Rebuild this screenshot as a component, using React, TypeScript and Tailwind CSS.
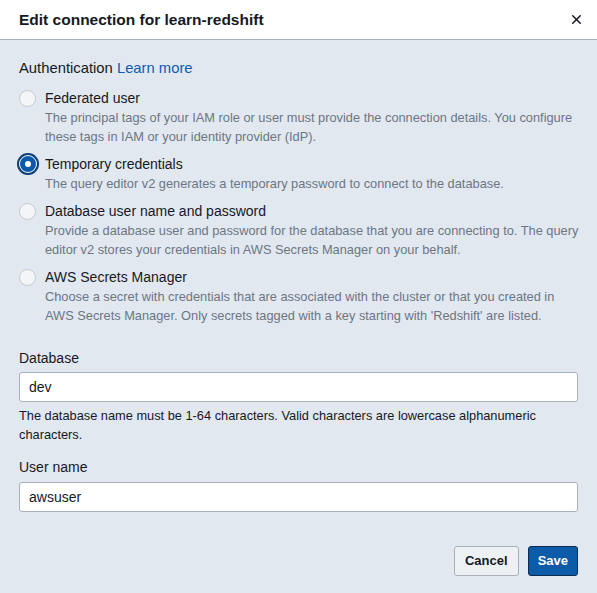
import { X } from 'lucide-react';

const options = [
  {
    id: 'federated',
    label: 'Federated user',
    desc: 'The principal tags of your IAM role or user must provide the connection details. You configure these tags in IAM or your identity provider (IdP).',
  },
  {
    id: 'temp',
    label: 'Temporary credentials',
    desc: 'The query editor v2 generates a temporary password to connect to the database.',
  },
  {
    id: 'dbuser',
    label: 'Database user name and password',
    desc: 'Provide a database user and password for the database that you are connecting to. The query editor v2 stores your credentials in AWS Secrets Manager on your behalf.',
  },
  {
    id: 'secrets',
    label: 'AWS Secrets Manager',
    desc: "Choose a secret with credentials that are associated with the cluster or that you created in AWS Secrets Manager. Only secrets tagged with a key starting with 'Redshift' are listed.",
  },
];

function Radio({ checked }: { checked: boolean }) {
  return (
    <span className="flex h-[20px] w-[17px] shrink-0 items-center justify-center">
      {checked ? (
        <span className="flex h-[22px] w-[22px] shrink-0 items-center justify-center rounded-full border-[2px] border-[#0b3d78] bg-white">
          <span className="flex h-[16px] w-[16px] items-center justify-center rounded-full bg-[#0b5ba8]">
            <span className="h-[6px] w-[6px] rounded-full bg-white" />
          </span>
        </span>
      ) : (
        <span className="h-[17px] w-[17px] shrink-0 rounded-full border border-[#c5c9cf] bg-[#f4f5f6]" />
      )}
    </span>
  );
}

export default function App() {
  const selected = 'temp';

  return (
    <div className="flex h-[593px] w-[597px] flex-col overflow-hidden bg-[#e2e8f0] font-['Liberation_Sans',Arial,sans-serif] text-[#16191f]">
      {/* header */}
      <div className="flex h-[40px] shrink-0 items-center justify-between border-b border-[#a9b1bb] bg-white pl-[19px] pr-[13px]">
        <h1 className="text-[15.5px] font-bold">Edit connection for learn-redshift</h1>
        <X size={15} strokeWidth={2.4} className="text-[#16191f]" />
      </div>

      {/* body */}
      <div className="flex flex-col px-[19px] pt-[19px]">
        <div className="text-[14.8px] leading-[18px]">
          Authentication <span className="text-[#0a5eb0]">Learn more</span>
        </div>

        <div className="mt-[11px] flex flex-col gap-[8px]">
          {options.map(o => (
            <div key={o.id} className="flex gap-[9px]">
              <Radio checked={o.id === selected} />
              <div className="-mr-[4px] flex flex-col">
                <div className="text-[14px] leading-[20px]">{o.label}</div>
                <div className="text-[12.8px] leading-[19px] text-[#6b7684]">{o.desc}</div>
              </div>
            </div>
          ))}
        </div>

        <div className="mt-[24px] text-[14px] leading-[18px]">Database</div>
        <div className="mt-[5px] flex h-[30px] items-center rounded-[3px] border border-[#a9b1bb] bg-white px-[9px] text-[14px]">
          dev
        </div>
        <div className="mt-[4px] text-[12.8px] leading-[19px] text-[#16191f]">
          The database name must be 1-64 characters. Valid characters are lowercase alphanumeric characters.
        </div>

        <div className="mt-[14px] text-[14px] leading-[18px]">User name</div>
        <div className="mt-[6px] flex h-[30px] items-center rounded-[3px] border border-[#a9b1bb] bg-white px-[9px] text-[14px]">
          awsuser
        </div>

        <div className="mt-[34px] flex justify-end gap-[9px]">
          <button className="h-[30px] rounded-[3px] border border-[#a9b1bb] bg-[#eef1f4] px-[10px] text-[13px] font-bold text-[#16191f]">
            Cancel
          </button>
          <button className="h-[30px] rounded-[3px] border border-[#0d2b4f] bg-[#0b5ba8] px-[9px] text-[13px] font-bold text-white">
            Save
          </button>
        </div>
      </div>
    </div>
  );
}
